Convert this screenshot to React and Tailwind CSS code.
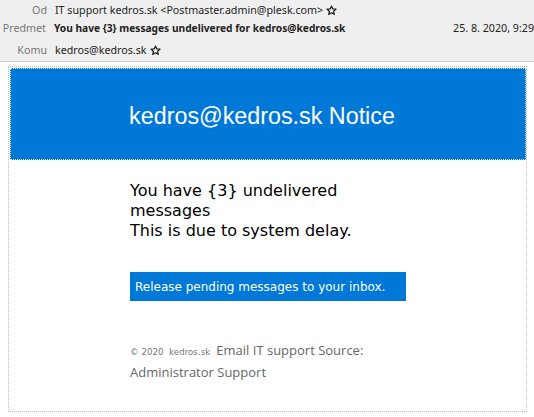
export default function App() {
  const Star = () => (
    <svg width="11" height="11" viewBox="0 0 16 16" className="inline-block ml-[3px] -mt-[2px]">
      <path d="M8 1.5l1.9 4.2 4.6.4-3.5 3 1.1 4.5L8 11.3l-4.1 2.3 1.1-4.5-3.5-3 4.6-.4z" fill="none" stroke="#222" strokeWidth="1.8" strokeLinejoin="round" />
    </svg>
  );
  return (
    <div className="w-[534px] h-[417px] bg-white overflow-hidden">
      <div className="h-[62px] bg-[#efefef] border-b border-[#c8c8c8] text-[10.7px] font-['Noto_Sans',sans-serif] text-[#222] pt-[1px]">
        <div className="flex h-[18px] items-center">
          <div className="w-[48px] text-right text-[#777] pr-[1px]">Od</div>
          <div className="pl-[7px]">IT support kedros.sk &lt;Postmaster.admin@plesk.com&gt;<Star /></div>
        </div>
        <div className="flex h-[19px] items-center">
          <div className="w-[48px] text-right text-[#777] pr-[1px]">Predmet</div>
          <div className="pl-[7px] font-bold text-[10.2px] w-[411px]">You have {"{3}"} messages undelivered for kedros@kedros.sk</div>
          <div className="whitespace-nowrap pl-[4px]">25. 8. 2020, 9:29</div>
        </div>
        <div className="flex h-[24px] items-center">
          <div className="w-[48px] text-right text-[#777] pr-[1px]">Komu</div>
          <div className="pl-[7px]">kedros@kedros.sk<Star /></div>
        </div>
      </div>
      <div className="ml-[8px] mt-[4px] w-[519px] h-[346px] border border-dotted border-[#bbb] pt-[1px] pl-[1px]">
        <div className="w-[516px] h-[92px] bg-[#0078d7] border border-dotted border-[#cfe4f7] flex items-center justify-center pr-[12px]">
          <span className="text-white text-[23.3px] font-['Liberation_Sans',sans-serif] mt-[4px]">kedros@kedros.sk Notice</span>
        </div>
        <div className="pl-[120px] pt-[21px] font-['DejaVu_Sans',sans-serif]">
          <div className="text-[16px] leading-[20px] text-black w-[240px]">
            You have {"{3}"} undelivered messages
            <br />
            This is due to system delay.
          </div>
          <div className="mt-[31px] w-[276px] h-[29px] bg-[#0078d7] text-white text-[12px] flex items-center pl-[5px] whitespace-nowrap">
            Release pending messages to your inbox.
          </div>
          <div className="mt-[39px] text-[#666] text-[13px] leading-[20px] w-[260px] font-['Open_Sans',sans-serif]">
            <span className="text-[8.7px] text-[#777] font-['DejaVu_Sans',sans-serif]">© 2020 &nbsp;kedros.sk&nbsp;</span> Email IT support Source: Administrator Support
          </div>
        </div>
      </div>
    </div>
  );
}
